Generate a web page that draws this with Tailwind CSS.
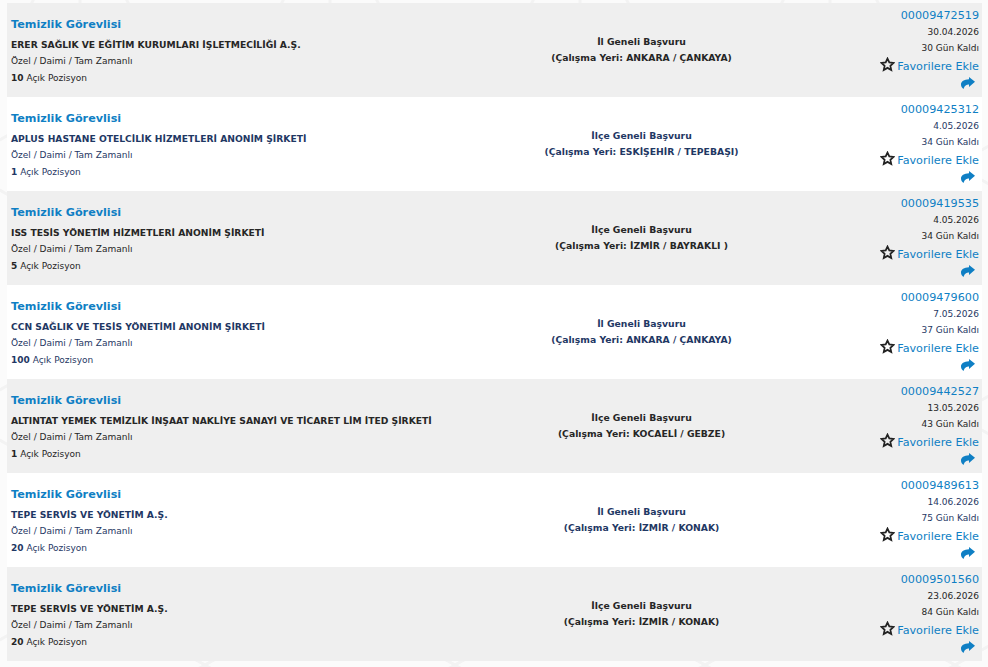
<!DOCTYPE html>
<html lang="tr">
  <head>
    <meta charset="UTF-8" />
    <title>İş İlanları</title>
    <script src="https://cdn.jsdelivr.net/npm/@tailwindcss/browser@4"></script>
  </head>
  <body class="relative h-[667px] overflow-hidden bg-[#fbfbfb] font-['DejaVu_Sans',sans-serif]">
    <!-- faint page background pattern -->
    <svg class="absolute inset-0 w-full h-full" xmlns="http://www.w3.org/2000/svg">
      <defs>
        <pattern id="bg-lines" width="250" height="250" patternUnits="userSpaceOnUse" x="-45" y="40">
          <path d="M0 125L125 55 250 125M125 55V0M125 0L60 40M125 0L190 40M0 125L125 195 250 125M125 195V250M60 250L85 195M190 250L165 195" fill="none" stroke="#f3f3f3" stroke-width="3" />
        </pattern>
      </defs>
      <rect width="100%" height="100%" fill="url(#bg-lines)" />
    </svg>

    <div id="list" class="relative pt-[3px] pl-[7px] pr-[6px]"></div>

    <script>
      const jobs = [
        ["ERER SAĞLIK VE EĞİTİM KURUMLARI İŞLETMECİLİĞİ A.Ş.", "10", "İl Geneli Başvuru", "ANKARA / ÇANKAYA", "00009472519", "30.04.2026", "30"],
        ["APLUS HASTANE OTELCİLİK HİZMETLERİ ANONİM ŞİRKETİ", "1", "İlçe Geneli Başvuru", "ESKİŞEHİR / TEPEBAŞI", "00009425312", "4.05.2026", "34"],
        ["ISS TESİS YÖNETİM HİZMETLERİ ANONİM ŞİRKETİ", "5", "İlçe Geneli Başvuru", "İZMİR / BAYRAKLI ", "00009419535", "4.05.2026", "34"],
        ["CCN SAĞLIK VE TESİS YÖNETİMİ ANONİM ŞİRKETİ", "100", "İl Geneli Başvuru", "ANKARA / ÇANKAYA", "00009479600", "7.05.2026", "37"],
        ["ALTINTAT YEMEK TEMİZLİK İNŞAAT NAKLİYE SANAYİ VE TİCARET LİM İTED ŞİRKETİ", "1", "İlçe Geneli Başvuru", "KOCAELİ / GEBZE", "00009442527", "13.05.2026", "43"],
        ["TEPE SERVİS VE YÖNETİM A.Ş.", "20", "İl Geneli Başvuru", "İZMİR / KONAK", "00009489613", "14.06.2026", "75"],
        ["TEPE SERVİS VE YÖNETİM A.Ş.", "20", "İlçe Geneli Başvuru", "İZMİR / KONAK", "00009501560", "23.06.2026", "84"],
      ];

      const star = `<svg viewBox="0 0 24 24" class="w-[15px] h-[15px] -mt-[5px] fill-none stroke-[#222] stroke-[2.8]"><path d="M12 2.5l2.9 6.2 6.7.8-5 4.6 1.4 6.7-6-3.4-6 3.4 1.4-6.7-5-4.6 6.7-.8z"/></svg>`;
      const share = `<svg viewBox="0 0 14 12" class="w-[14px] h-[12px] fill-[#0f7fc4]"><path d="M8 0L14 4.8 8 10V7.4C5.6 7.4 3.6 8.4 2.6 12 .8 10.6 0 9 0 7.4 0 4.4 3 2.4 8 2.2z"/></svg>`;

      document.getElementById("list").innerHTML = jobs
        .map((job, i) => {
          const rowClass = i % 2 == 0 ? "bg-[#efefef] text-[#262626]" : "bg-white text-[#1f3864]";
          return `
          <div class="h-[94px] flex text-[9px] leading-[17px] ${rowClass}">
            <div class="w-[500px] pl-1 pt-[13px]">
              <h3 class="text-[11.2px] leading-[18px] font-bold text-[#0f7fc4] mb-[3px]">Temizlik Görevlisi</h3>
              <p class="font-bold text-[9.2px] leading-4">${job[0]}</p>
              <p>Özel / Daimi / Tam Zamanlı</p>
              <p><b>${job[1]}</b> Açık Pozisyon</p>
            </div>
            <div class="w-[269px] pt-[31px] text-center font-bold text-[9.25px] leading-4">
              <p>${job[2]}</p>
              <p>(Çalışma Yeri: ${job[3]})</p>
            </div>
            <div class="flex-1 pr-[3px] pt-[5px] flex flex-col items-end">
              <a class="text-[11.2px] leading-4 text-[#0f7fc4]">${job[4]}</a>
              <p class="leading-4">${job[5]}</p>
              <p class="leading-4">${job[6]} Gün Kaldı</p>
              <a class="flex items-center gap-[2px] text-[11.2px] leading-[22px] text-[#0f7fc4]">${star}Favorilere Ekle</a>
              <span class="-mt-[1px] mr-[4px]">${share}</span>
            </div>
          </div>`;
        })
        .join("");
    </script>
  </body>
</html>
